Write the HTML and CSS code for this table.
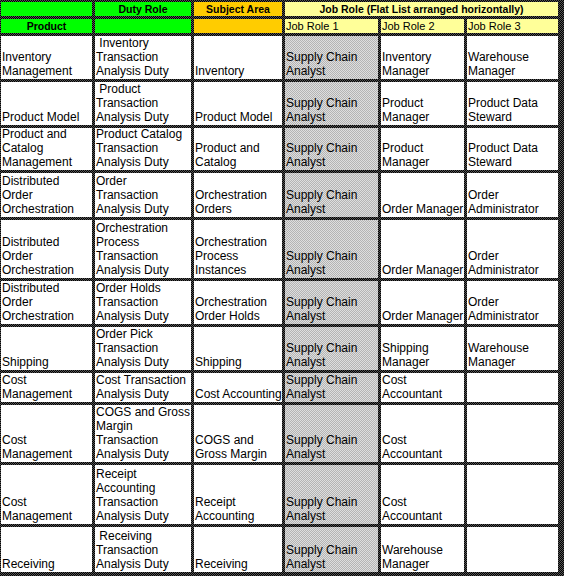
FILE: index.html
```html
<!DOCTYPE html>
<html>
<head>
<meta charset="utf-8">
<link rel="stylesheet" href="styles.css">
</head>
<body>
<div class="sheet">
  <div class="hd green"></div>
  <div class="hd green center bold">Duty Role</div>
  <div class="hd orange center bold">Subject Area</div>
  <div class="hd yellow center bold span3">Job Role (Flat List arranged horizontally)</div>

  <div class="hd green center bold">Product</div>
  <div class="hd green"></div>
  <div class="hd orange"></div>
  <div class="hd yellow">Job Role 1</div>
  <div class="hd yellow">Job Role 2</div>
  <div class="hd yellow">Job Role 3</div>

  <div class="cell"><div>Inventory<br>Management</div></div>
  <div class="cell"><div>&nbsp;Inventory<br>Transaction<br>Analysis Duty</div></div>
  <div class="cell"><div>Inventory</div></div>
  <div class="cell gray"><div>Supply Chain<br>Analyst</div></div>
  <div class="cell"><div>Inventory<br>Manager</div></div>
  <div class="cell"><div>Warehouse<br>Manager</div></div>

  <div class="cell"><div>Product Model</div></div>
  <div class="cell"><div>&nbsp;Product<br>Transaction<br>Analysis Duty</div></div>
  <div class="cell"><div>Product Model</div></div>
  <div class="cell gray"><div>Supply Chain<br>Analyst</div></div>
  <div class="cell"><div>Product<br>Manager</div></div>
  <div class="cell"><div>Product Data<br>Steward</div></div>

  <div class="cell"><div>Product and<br>Catalog<br>Management</div></div>
  <div class="cell"><div>Product Catalog<br>Transaction<br>Analysis Duty</div></div>
  <div class="cell"><div>Product and<br>Catalog</div></div>
  <div class="cell gray"><div>Supply Chain<br>Analyst</div></div>
  <div class="cell"><div>Product<br>Manager</div></div>
  <div class="cell"><div>Product Data<br>Steward</div></div>

  <div class="cell"><div>Distributed<br>Order<br>Orchestration</div></div>
  <div class="cell"><div>Order<br>Transaction<br>Analysis Duty</div></div>
  <div class="cell"><div>Orchestration<br>Orders</div></div>
  <div class="cell gray"><div>Supply Chain<br>Analyst</div></div>
  <div class="cell"><div>Order Manager</div></div>
  <div class="cell"><div>Order<br>Administrator</div></div>

  <div class="cell"><div>Distributed<br>Order<br>Orchestration</div></div>
  <div class="cell"><div>Orchestration<br>Process<br>Transaction<br>Analysis Duty</div></div>
  <div class="cell"><div>Orchestration<br>Process<br>Instances</div></div>
  <div class="cell gray"><div>Supply Chain<br>Analyst</div></div>
  <div class="cell"><div>Order Manager</div></div>
  <div class="cell"><div>Order<br>Administrator</div></div>

  <div class="cell"><div>Distributed<br>Order<br>Orchestration</div></div>
  <div class="cell"><div>Order Holds<br>Transaction<br>Analysis Duty</div></div>
  <div class="cell"><div>Orchestration<br>Order Holds</div></div>
  <div class="cell gray"><div>Supply Chain<br>Analyst</div></div>
  <div class="cell"><div>Order Manager</div></div>
  <div class="cell"><div>Order<br>Administrator</div></div>

  <div class="cell"><div>Shipping</div></div>
  <div class="cell"><div>Order Pick<br>Transaction<br>Analysis Duty</div></div>
  <div class="cell"><div>Shipping</div></div>
  <div class="cell gray"><div>Supply Chain<br>Analyst</div></div>
  <div class="cell"><div>Shipping<br>Manager</div></div>
  <div class="cell"><div>Warehouse<br>Manager</div></div>

  <div class="cell"><div>Cost<br>Management</div></div>
  <div class="cell"><div>Cost Transaction<br>Analysis Duty</div></div>
  <div class="cell"><div>Cost Accounting</div></div>
  <div class="cell gray"><div>Supply Chain<br>Analyst</div></div>
  <div class="cell"><div>Cost<br>Accountant</div></div>
  <div class="cell"><div></div></div>

  <div class="cell"><div>Cost<br>Management</div></div>
  <div class="cell"><div>COGS and Gross<br>Margin<br>Transaction<br>Analysis Duty</div></div>
  <div class="cell"><div>COGS and<br>Gross Margin</div></div>
  <div class="cell gray"><div>Supply Chain<br>Analyst</div></div>
  <div class="cell"><div>Cost<br>Accountant</div></div>
  <div class="cell"><div></div></div>

  <div class="cell"><div>Cost<br>Management</div></div>
  <div class="cell"><div>Receipt<br>Accounting<br>Transaction<br>Analysis Duty</div></div>
  <div class="cell"><div>Receipt<br>Accounting</div></div>
  <div class="cell gray"><div>Supply Chain<br>Analyst</div></div>
  <div class="cell"><div>Cost<br>Accountant</div></div>
  <div class="cell"><div></div></div>

  <div class="cell"><div>Receiving</div></div>
  <div class="cell"><div>&nbsp;Receiving<br>Transaction<br>Analysis Duty</div></div>
  <div class="cell"><div>Receiving</div></div>
  <div class="cell gray"><div>Supply Chain<br>Analyst</div></div>
  <div class="cell"><div>Warehouse<br>Manager</div></div>
  <div class="cell"><div></div></div>
</div>
</body>
</html>
```

FILE: styles.css
```css
html {
  background: repeating-conic-gradient(#000 0 25%, #555 0 50%) 0 0 / 2px 2px;
  height: 100%;
}
body {
  margin: 0;
  height: 576px;
  overflow: hidden;
}
.sheet {
  display: grid;
  grid-template-columns: 91px 96px 88px 93px 83px 91px;
  grid-template-rows: 14px 14px 43px 43px 42px 44px 58px 43px 43px 29px 57px 59px 45px;
  gap: 3px;
  padding: 2px 0 0 1px;
  font-family: "Liberation Sans", Arial, sans-serif;
  color: #000;
}
.hd {
  font-size: 11px;
  line-height: 14px;
  white-space: nowrap;
  overflow: hidden;
  padding-left: 1px;
}
.bold {
  font-weight: bold;
  font-size: 10.5px;
}
.center {
  text-align: center;
  padding-left: 0;
}
.green { background: #00ff00; }
.orange { background: #ffcc00; }
.yellow { background: #ffff99; }
.span3 { grid-column: 4 / span 3; }
.cell {
  background: #fff;
  display: flex;
  align-items: flex-end;
  overflow: hidden;
  font-size: 12px;
  line-height: 14px;
  white-space: nowrap;
  padding-left: 1px;
}
.cell > div {
  padding-bottom: 1px;
}
.cell.gray {
  background: repeating-conic-gradient(#b4b4b4 0 25%, #dedede 0 50%) 0 0 / 2px 2px;
}
```
